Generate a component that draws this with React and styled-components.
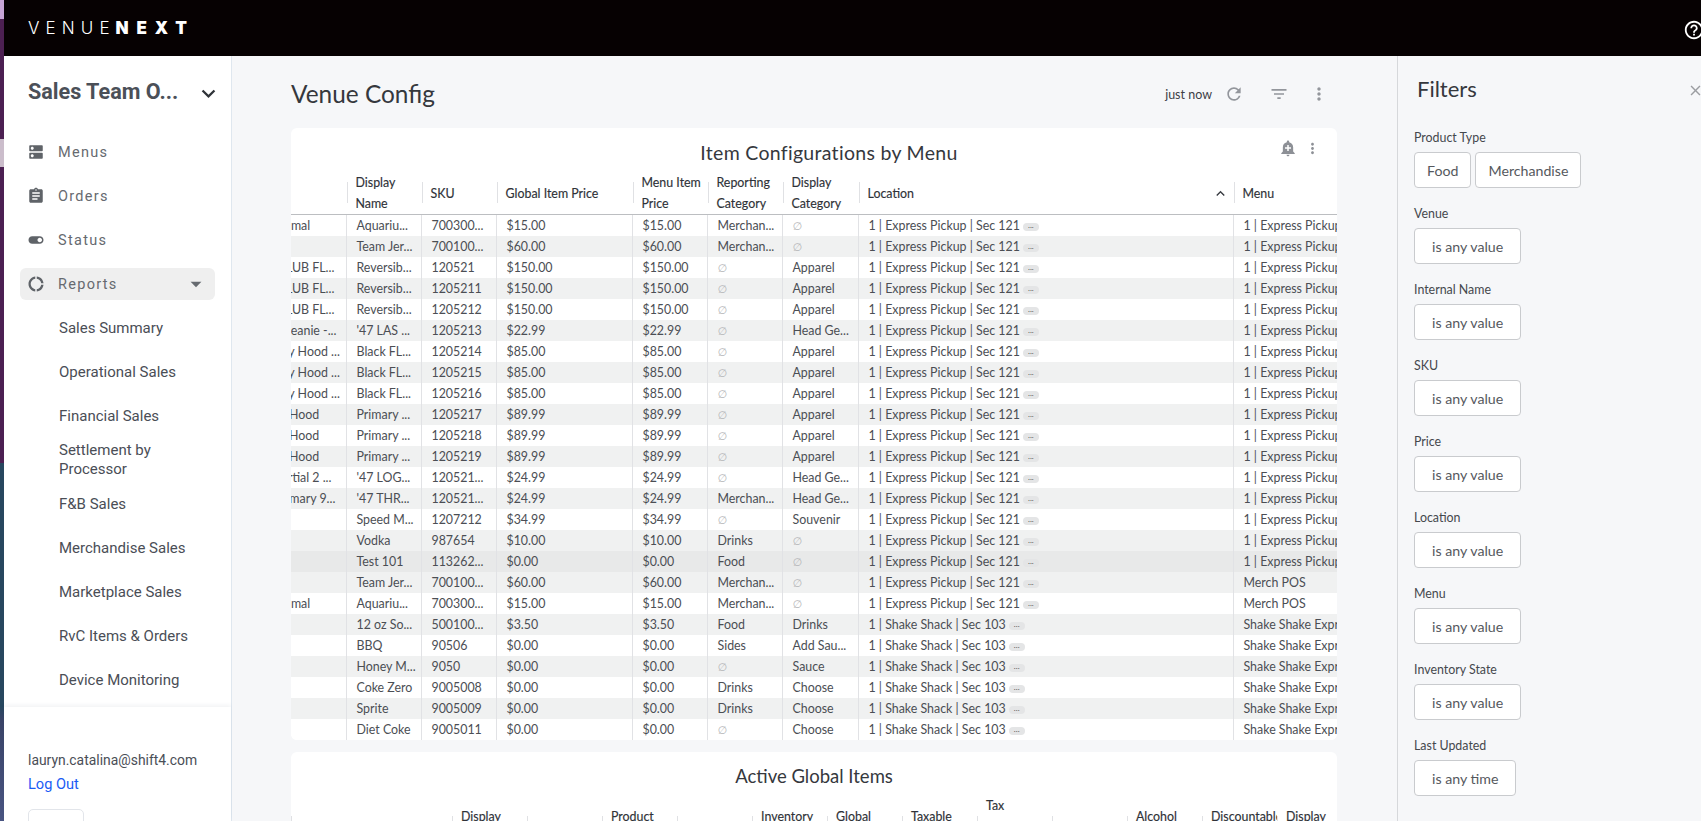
import React from "react";
import styled, { createGlobalStyle } from "styled-components";
import {
  MdDns,
  MdAssignment,
  MdToggleOn,
  MdDonutLarge,
  MdExpandMore,
  MdArrowDropDown,
  MdRefresh,
  MdFilterList,
  MdMoreVert,
  MdAddAlert,
  MdClose,
  MdHelpOutline,
  MdKeyboardArrowUp,
} from "react-icons/md";

const bodyFont = `"Lato", "Noto Sans", sans-serif`;
const navFont = `"Roboto", "Liberation Sans", sans-serif`;

const GlobalStyle = createGlobalStyle`
  html, body {
    margin: 0;
    height: 100%;
    overflow: hidden;
    background: #f6f7f9;
  }
  #root {
    height: 100%;
  }
`;

const Page = styled.div`
  display: flex;
  height: 821px;
  width: 1701px;
  overflow: hidden;
  font-family: ${bodyFont};
`;

/* sliver of the desktop behind the browser window */
const DesktopSliver = styled.div`
  flex: 0 0 4px;
  background: linear-gradient(
    to bottom,
    #c6a4d6 0 19px,
    #4c2052 19px 139px,
    #cbbdcb 139px 167px,
    #4c2052 167px 463px,
    #27475f 463px 706px,
    #3a4468 720px,
    #4a5582 821px
  );
`;

const Window = styled.div`
  flex: 1;
  min-width: 0;
  display: flex;
  flex-direction: column;
`;

const TopBar = styled.header`
  flex: 0 0 56px;
  background: #060102;
  display: flex;
  align-items: center;
  justify-content: space-between;
  padding-left: 24px;
  color: #fff;
`;

const Logo = styled.div`
  font-family: "Inter", ${bodyFont};
  font-size: 17px;
  letter-spacing: 6.1px;
  font-weight: 300;
  white-space: nowrap;

  b {
    font-weight: 900;
    letter-spacing: 7.8px;
    margin-left: 0;
  }
`;

const HelpButton = styled.span`
  display: flex;
  margin: 4px -4px 0 0;
  font-size: 22px;
`;

const Body = styled.div`
  flex: 1;
  min-height: 0;
  display: flex;
`;

const Sidebar = styled.aside`
  flex: 0 0 228px;
  background: #fff;
  border-right: 1px solid #dfe7ef;
  box-sizing: border-box;
  display: flex;
  flex-direction: column;
  font-family: ${navFont};
`;

const OrgHeader = styled.div`
  flex: 0 0 70px;
  margin-bottom: 4px;
  padding: 0 9px 0 24px;
  display: flex;
  align-items: center;
  justify-content: space-between;
  color: #4b5058;
  font-size: 21.6px;
  font-weight: 700;

  svg {
    font-size: 27px;
    color: #2f3338;
    margin-top: 4px;
  }
`;

const Nav = styled.nav`
  flex: 1;
  min-height: 0;
  overflow: hidden;
`;

const NavRow = styled.div`
  height: ${(p) => (p.$active ? "32px" : "44px")};
  margin: ${(p) => (p.$active ? "6px 16px" : "0 16px")};
  padding: 0 6px 0 7px;
  border-radius: 6px;
  background: ${(p) => (p.$active ? "#efefef" : "transparent")};
  display: flex;
  align-items: center;
  color: #666a70;
  font-size: 14.5px;
  letter-spacing: 1.3px;

  > svg:first-child {
    font-size: 18px;
    margin-right: 13px;
    flex: none;
    color: #5f6368;
  }
`;

const Caret = styled(MdArrowDropDown)`
  margin-left: auto;
  font-size: 26px;
  color: #666a70;
`;

const SubItem = styled.div`
  min-height: 44px;
  padding: 0 40px 0 55px;
  display: flex;
  align-items: center;
  color: #4a4e56;
  font-size: 15px;
  line-height: 19px;
`;

const SidebarFooter = styled.div`
  flex: 0 0 114px;
  min-height: 0;
  overflow: hidden;
  box-sizing: border-box;
  padding: 41px 16px 0 24px;
  box-shadow: 0 -2px 4px rgba(30, 50, 80, 0.06);
  color: #4a4e56;
  font-size: 14.6px;
  line-height: 24px;
`;

const Email = styled.div`
  font-size: 13.9px;
`;

const LogOut = styled.a`
  display: block;
  color: #1a5cf5;
`;

const FooterButton = styled.div`
  width: 54px;
  height: 30px;
  margin-top: 13px;
  border: 1px solid #e2e5ea;
  border-radius: 5px;
`;

const Main = styled.main`
  flex: 1;
  min-width: 0;
  padding: 0 60px 0 59px;
  overflow: hidden;
  background: #f6f7f9;
`;

const MainHeader = styled.div`
  height: 68px;
  padding-top: 4px;
  display: flex;
  align-items: center;
  justify-content: space-between;
`;

const PageTitle = styled.h1`
  margin: -1px 0 0;
  font-size: 24.4px;
  font-weight: 400;
  color: #35383d;
`;

const HeaderTools = styled.div`
  display: flex;
  align-items: center;
  padding-right: 8px;
  font-size: 12.5px;
  color: #3d4046;
`;

const ToolIcon = styled.span`
  display: flex;
  margin-left: ${(p) => p.$gap}px;
  font-size: ${(p) => p.$size}px;
  color: #93969c;
`;

const Card = styled.section`
  position: relative;
  background: #fff;
  border-radius: 6px;
  overflow: hidden;
  margin-bottom: 12px;
`;

const CardTitle = styled.h2`
  box-sizing: border-box;
  margin: 0;
  height: ${(p) => p.$height}px;
  padding: ${(p) => p.$top}px 0 0 ${(p) => p.$shift}px;
  display: flex;
  align-items: center;
  justify-content: center;
  font-size: ${(p) => p.$size}px;
  letter-spacing: ${(p) => p.$spacing || 0}px;
  font-weight: 400;
  color: #35383d;
`;

const CardTools = styled.div`
  position: absolute;
  top: 11px;
  right: 16px;
  display: flex;
  align-items: center;
  gap: 7px;
  font-size: 18px;
  color: #8d9096;

  svg:last-child {
    font-size: 17px;
  }
`;

const Table = styled.table`
  table-layout: fixed;
  border-collapse: collapse;
  width: ${(p) => p.$width}px;
  margin-left: ${(p) => p.$offset}px;
  font-size: 12.4px;
  color: #4b4e54;
`;

const HeadCell = styled.th`
  position: relative;
  padding: 0 8px 0 9px;
  height: 42px;
  font-weight: 400;
  font-size: 12.4px;
  line-height: 21px;
  text-align: left;
  color: #2f3238;
  white-space: nowrap;
  overflow: hidden;
  -webkit-text-stroke: 0.15px #2f3238;
  border-bottom: 1px solid #bcbec1;

  &::before {
    content: "";
    position: absolute;
    left: 0;
    top: 50%;
    height: 21px;
    margin-top: -11px;
    border-left: 1px solid #e0e1e4;
  }
`;

const HeadInner = styled.div`
  display: flex;
  align-items: center;
  justify-content: space-between;

  svg {
    font-size: 17px;
    color: #3b3e44;
    margin-right: -3px;
  }
`;

const Row = styled.tr`
  background: ${(p) => (p.$hover ? "#e8e9e9" : p.$striped ? "#f0f1f1" : "#fff")};
`;

const Cell = styled.td`
  padding: 0;
  border-left: 1px solid #e1e2e5;
`;

const CellBody = styled.div`
  height: 21px;
  padding: 0 8px 0 ${(p) => (p.$lead ? 3.5 : 9.5)}px;
  white-space: nowrap;
  overflow: hidden;
  line-height: 21px;
`;

const NullMark = styled.span`
  font-family: "DejaVu Sans", sans-serif;
  font-size: 11px;
  color: #b4b5b8;
`;

const MorePill = styled.span`
  display: inline-block;
  width: 16px;
  height: 8px;
  margin-left: 3px;
  border-radius: 4px;
  background: #e4e5e6;
  color: #555;
  font-size: 8px;
  line-height: 4px;
  text-align: center;
  vertical-align: middle;
  overflow: hidden;
`;

const Filters = styled.aside`
  flex: 0 0 304px;
  box-sizing: border-box;
  border-left: 1px solid #d6d8db;
  background: #f6f7f9;
  padding-left: 16px;
  overflow: hidden;
`;

const FiltersHeader = styled.div`
  height: 65px;
  margin-bottom: 9px;
  padding-left: 3px;
  display: flex;
  align-items: center;
  justify-content: space-between;
  font-size: 22px;
  color: #35383d;

  svg {
    font-size: 17px;
    color: #9b9da1;
    margin: 3px -3px 0 0;
  }
`;

const FilterGroup = styled.div`
  margin-bottom: 18px;
`;

const FilterLabel = styled.div`
  height: 16px;
  margin-bottom: 6px;
  font-size: 12.4px;
  line-height: 16px;
  color: #45484d;
`;

const FilterButtons = styled.div`
  display: flex;
  gap: 4px;
`;

const FilterButton = styled.div`
  box-sizing: border-box;
  height: 36px;
  padding: 0 ${(p) => p.$pad || 17}px;
  display: flex;
  align-items: center;
  background: #fff;
  border: 1px solid #c9cbce;
  border-radius: 4px;
  font-size: 14.2px;
  color: #55585d;
`;

const NONE = null;
const EXPRESS = "1 | Express Pickup | Sec 121";
const SHACK = "1 | Shake Shack | Sec 103";
const SHACK_MENU = "Shake Shake Express Menu";

// internal name, display name, sku, global price, menu price, reporting, display, location, menu
const itemRows = [
  ["Sea Animal", "Aquariu...", "700300...", "$15.00", "$15.00", "Merchan...", NONE, EXPRESS, EXPRESS],
  ["", "Team Jer...", "700100...", "$60.00", "$60.00", "Merchan...", NONE, EXPRESS, EXPRESS],
  ["THE CLUB FL...", "Reversib...", "120521", "$150.00", "$150.00", NONE, "Apparel", EXPRESS, EXPRESS],
  ["THE CLUB FL...", "Reversib...", "1205211", "$150.00", "$150.00", NONE, "Apparel", EXPRESS, EXPRESS],
  ["THE CLUB FL...", "Reversib...", "1205212", "$150.00", "$150.00", NONE, "Apparel", EXPRESS, EXPRESS],
  ["Black Beanie -...", "'47 LAS ...", "1205213", "$22.99", "$22.99", NONE, "Head Ge...", EXPRESS, EXPRESS],
  ["Country Hood ...", "Black FL...", "1205214", "$85.00", "$85.00", NONE, "Apparel", EXPRESS, EXPRESS],
  ["Country Hood ...", "Black FL...", "1205215", "$85.00", "$85.00", NONE, "Apparel", EXPRESS, EXPRESS],
  ["Country Hood ...", "Black FL...", "1205216", "$85.00", "$85.00", NONE, "Apparel", EXPRESS, EXPRESS],
  ["Fleece Hood", "Primary ...", "1205217", "$89.99", "$89.99", NONE, "Apparel", EXPRESS, EXPRESS],
  ["Fleece Hood", "Primary ...", "1205218", "$89.99", "$89.99", NONE, "Apparel", EXPRESS, EXPRESS],
  ["Fleece Hood", "Primary ...", "1205219", "$89.99", "$89.99", NONE, "Apparel", EXPRESS, EXPRESS],
  ["Red Partial 2 ...", "'47 LOG...", "120521...", "$24.99", "$24.99", NONE, "Head Ge...", EXPRESS, EXPRESS],
  ["Red Primary 9...", "'47 THR...", "120521...", "$24.99", "$24.99", "Merchan...", "Head Ge...", EXPRESS, EXPRESS],
  ["", "Speed M...", "1207212", "$34.99", "$34.99", NONE, "Souvenir", EXPRESS, EXPRESS],
  ["", "Vodka", "987654", "$10.00", "$10.00", "Drinks", NONE, EXPRESS, EXPRESS],
  ["", "Test 101", "113262...", "$0.00", "$0.00", "Food", NONE, EXPRESS, EXPRESS],
  ["", "Team Jer...", "700100...", "$60.00", "$60.00", "Merchan...", NONE, EXPRESS, "Merch POS"],
  ["Sea Animal", "Aquariu...", "700300...", "$15.00", "$15.00", "Merchan...", NONE, EXPRESS, "Merch POS"],
  ["", "12 oz So...", "500100...", "$3.50", "$3.50", "Food", "Drinks", SHACK, SHACK_MENU],
  ["", "BBQ", "90506", "$0.00", "$0.00", "Sides", "Add Sau...", SHACK, SHACK_MENU],
  ["", "Honey M...", "9050", "$0.00", "$0.00", NONE, "Sauce", SHACK, SHACK_MENU],
  ["", "Coke Zero", "9005008", "$0.00", "$0.00", "Drinks", "Choose", SHACK, SHACK_MENU],
  ["", "Sprite", "9005009", "$0.00", "$0.00", "Drinks", "Choose", SHACK, SHACK_MENU],
  ["", "Diet Coke", "9005011", "$0.00", "$0.00", NONE, "Choose", SHACK, SHACK_MENU],
];

const itemColumns = [100, 75, 75, 136, 75, 75, 76, 375, 300];

const globalColumns = [
  { width: 161 },
  { width: 75, label: ["Display", "Name"] },
  { width: 75 },
  { width: 75, label: ["Product", "Type"] },
  { width: 75 },
  { width: 75, label: ["Inventory", "State"] },
  { width: 75, label: ["Global", "Price"] },
  { width: 75, label: ["Taxable", "Item"] },
  { width: 75, label: ["Tax", "Rule", "Code"] },
  { width: 75 },
  { width: 75, label: ["Alcohol", "Item"] },
  { width: 75, label: ["Discountable", "Item"] },
  { width: 75, label: ["Display", "Order"] },
];

const filterGroups = [
  { label: "Venue", value: "is any value" },
  { label: "Internal Name", value: "is any value" },
  { label: "SKU", value: "is any value" },
  { label: "Price", value: "is any value" },
  { label: "Location", value: "is any value" },
  { label: "Menu", value: "is any value" },
  { label: "Inventory State", value: "is any value" },
  { label: "Last Updated", value: "is any time" },
];

const subItems = [
  "Sales Summary",
  "Operational Sales",
  "Financial Sales",
  "Settlement by Processor",
  "F&B Sales",
  "Merchandise Sales",
  "Marketplace Sales",
  "RvC Items & Orders",
  "Device Monitoring",
];

const sum = (list) => list.reduce((a, b) => a + b, 0);

const HeadLines = ({ lines }) => lines.map((line) => <div key={line}>{line}</div>);

const ItemsTable = () => (
  <Table $width={sum(itemColumns)} $offset={-45}>
    <colgroup>
      {itemColumns.map((w, i) => (
        <col key={i} width={w} />
      ))}
    </colgroup>
    <thead>
      <tr>
        <HeadCell />
        <HeadCell>
          <HeadLines lines={["Display", "Name"]} />
        </HeadCell>
        <HeadCell>SKU</HeadCell>
        <HeadCell>Global Item Price</HeadCell>
        <HeadCell>
          <HeadLines lines={["Menu Item", "Price"]} />
        </HeadCell>
        <HeadCell>
          <HeadLines lines={["Reporting", "Category"]} />
        </HeadCell>
        <HeadCell>
          <HeadLines lines={["Display", "Category"]} />
        </HeadCell>
        <HeadCell>
          <HeadInner>
            Location
            <MdKeyboardArrowUp />
          </HeadInner>
        </HeadCell>
        <HeadCell>Menu</HeadCell>
      </tr>
    </thead>
    <tbody>
      {itemRows.map((row, r) => (
        <Row key={r} $striped={r % 2 === 1} $hover={r === 16}>
          {row.map((value, c) => (
            <Cell key={c}>
              <CellBody $lead={c === 0}>
                {value === NONE ? <NullMark>∅</NullMark> : value}
                {c === 7 && <MorePill>...</MorePill>}
              </CellBody>
            </Cell>
          ))}
        </Row>
      ))}
    </tbody>
  </Table>
);

const GlobalItemsTable = () => (
  <Table $width={sum(globalColumns.map((c) => c.width))} $offset={0}>
    <colgroup>
      {globalColumns.map((c, i) => (
        <col key={i} width={c.width} />
      ))}
    </colgroup>
    <thead>
      <tr>
        {globalColumns.map((c, i) => (
          <HeadCell key={i}>{c.label && <HeadLines lines={c.label} />}</HeadCell>
        ))}
      </tr>
    </thead>
  </Table>
);

export default function App() {
  return (
    <>
      <GlobalStyle />
      <Page>
        <DesktopSliver />
        <Window>
          <TopBar>
            <Logo>
              VENUE<b>NEXT</b>
            </Logo>
            <HelpButton>
              <MdHelpOutline />
            </HelpButton>
          </TopBar>
          <Body>
            <Sidebar>
              <OrgHeader>
                Sales Team O...
                <MdExpandMore />
              </OrgHeader>
              <Nav>
                <NavRow>
                  <MdDns />
                  Menus
                </NavRow>
                <NavRow>
                  <MdAssignment />
                  Orders
                </NavRow>
                <NavRow>
                  <MdToggleOn />
                  Status
                </NavRow>
                <NavRow $active>
                  <MdDonutLarge />
                  Reports
                  <Caret />
                </NavRow>
                {subItems.map((item) => (
                  <SubItem key={item}>{item}</SubItem>
                ))}
              </Nav>
              <SidebarFooter>
                <Email>lauryn.catalina@shift4.com</Email>
                <LogOut>Log Out</LogOut>
                <FooterButton />
              </SidebarFooter>
            </Sidebar>
            <Main>
              <MainHeader>
                <PageTitle>Venue Config</PageTitle>
                <HeaderTools>
                  just now
                  <ToolIcon $gap={12} $size={20}>
                    <MdRefresh />
                  </ToolIcon>
                  <ToolIcon $gap={25} $size={20}>
                    <MdFilterList />
                  </ToolIcon>
                  <ToolIcon $gap={20} $size={20}>
                    <MdMoreVert />
                  </ToolIcon>
                </HeaderTools>
              </MainHeader>
              <Card>
                <CardTitle $height={44} $top={4} $shift={30} $size={19.5} $spacing={0.3}>
                  Item Configurations by Menu
                </CardTitle>
                <CardTools>
                  <MdAddAlert />
                  <MdMoreVert />
                </CardTools>
                <ItemsTable />
              </Card>
              <Card>
                <CardTitle $height={43} $top={5} $shift={0} $size={18.5}>
                  Active Global Items
                </CardTitle>
                <GlobalItemsTable />
              </Card>
            </Main>
            <Filters>
              <FiltersHeader>
                Filters
                <MdClose />
              </FiltersHeader>
              <FilterGroup>
                <FilterLabel>Product Type</FilterLabel>
                <FilterButtons>
                  <FilterButton $pad={12}>Food</FilterButton>
                  <FilterButton $pad={12}>Merchandise</FilterButton>
                </FilterButtons>
              </FilterGroup>
              {filterGroups.map((g) => (
                <FilterGroup key={g.label}>
                  <FilterLabel>{g.label}</FilterLabel>
                  <FilterButtons>
                    <FilterButton>{g.value}</FilterButton>
                  </FilterButtons>
                </FilterGroup>
              ))}
            </Filters>
          </Body>
        </Window>
      </Page>
    </>
  );
}
